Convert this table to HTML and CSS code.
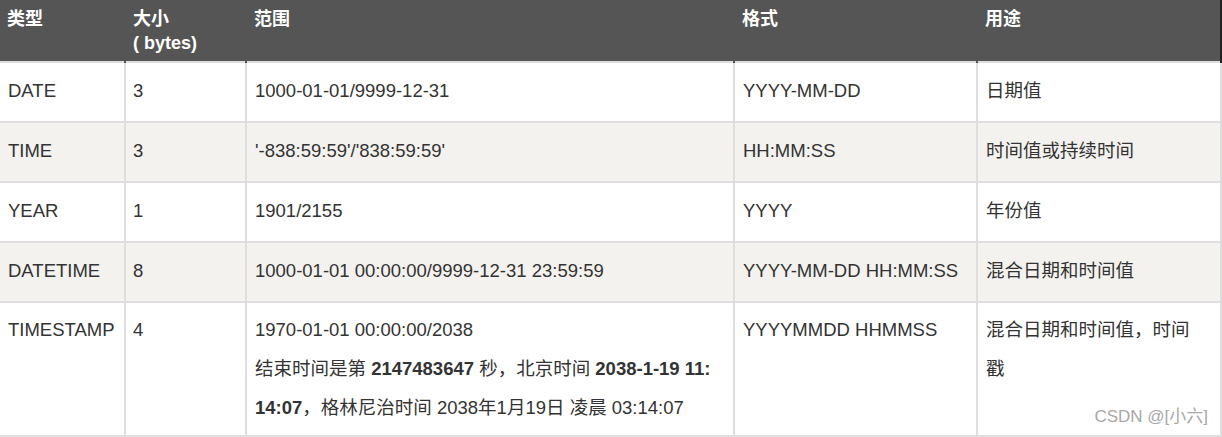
FILE: index.html
```html
<!DOCTYPE html>
<html lang="zh">
<head>
<meta charset="utf-8">
<link rel="stylesheet" href="styles.css">
</head>
<body>
<div class="wrap">
  <table class="types">
    <colgroup>
      <col class="c1"><col class="c2"><col class="c3"><col class="c4"><col class="c5">
    </colgroup>
    <thead>
      <tr>
        <th>类型</th>
        <th>大小<br>( bytes)</th>
        <th>范围</th>
        <th>格式</th>
        <th>用途</th>
      </tr>
    </thead>
    <tbody>
      <tr>
        <td>DATE</td><td>3</td><td>1000-01-01/9999-12-31</td><td>YYYY-MM-DD</td><td>日期值</td>
      </tr>
      <tr class="alt">
        <td>TIME</td><td>3</td><td>'-838:59:59'/'838:59:59'</td><td>HH:MM:SS</td><td>时间值或持续时间</td>
      </tr>
      <tr>
        <td>YEAR</td><td>1</td><td>1901/2155</td><td>YYYY</td><td>年份值</td>
      </tr>
      <tr class="alt">
        <td>DATETIME</td><td>8</td><td>1000-01-01 00:00:00/9999-12-31 23:59:59</td><td>YYYY-MM-DD HH:MM:SS</td><td>混合日期和时间值</td>
      </tr>
      <tr class="top">
        <td>TIMESTAMP</td><td>4</td>
        <td>1970-01-01 00:00:00/2038<br>结束时间是第 <b>2147483647</b> 秒，北京时间 <b>2038-1-19 11:<br>14:07</b>，格林尼治时间 2038年1月19日 凌晨 03:14:07</td>
        <td>YYYYMMDD HHMMSS</td>
        <td>混合日期和时间值，时间<br>戳</td>
      </tr>
    </tbody>
  </table>
  <div class="mark">CSDN @[小六]</div>
</div>
</body>
</html>
```

FILE: styles.css
```css
html, body {
  margin: 0;
  padding: 0;
  background: #ffffff;
}

.wrap {
  position: relative;
  width: 1222px;
  height: 437px;
  overflow: hidden;
}

.types {
  border-collapse: collapse;
  table-layout: fixed;
  width: 1221px;
  font-family: "Liberation Sans", Arial, "Noto Sans CJK SC", sans-serif;
  font-size: 18.5px;
  color: #333333;
}

.c1 { width: 125px; }
.c2 { width: 121px; }
.c3 { width: 488px; }
.c4 { width: 243px; }
.c5 { width: 244px; }

.types th {
  background: #555555;
  color: #ffffff;
  font-weight: bold;
  font-size: 18px;
  text-align: left;
  vertical-align: top;
  line-height: 24px;
  height: 48px;
  padding: 7px 8px 6px 7px;
  border-left: 2px solid #6a6a6a;
  border-right: 2px solid #555555;
}

.types th:first-child {
  border-left: none;
  padding-left: 7px;
}

.types th:last-child {
  border-right: 2px solid #222222;
}

.types td {
  border: 2px solid #dedede;
  padding: 8px 7px 11px 7px;
  line-height: 39px;
  vertical-align: top;
  background: #ffffff;
}

.types td:first-child {
  border-left: none;
  padding-left: 8px;
}

.types td:nth-child(3),
.types td:nth-child(4),
.types td:nth-child(5) {
  padding-left: 8px;
}

.types tr.alt td {
  background: #f3f2ef;
}

.types tr.top td {
  padding-top: 7px;
  padding-bottom: 8px;
}

.types b {
  font-weight: bold;
}

.mark {
  position: absolute;
  right: 14px;
  bottom: 10px;
  font-family: "Liberation Sans", Arial, "Noto Sans CJK SC", sans-serif;
  font-size: 17px;
  color: #a8a8a8;
  line-height: 20px;
}
```
